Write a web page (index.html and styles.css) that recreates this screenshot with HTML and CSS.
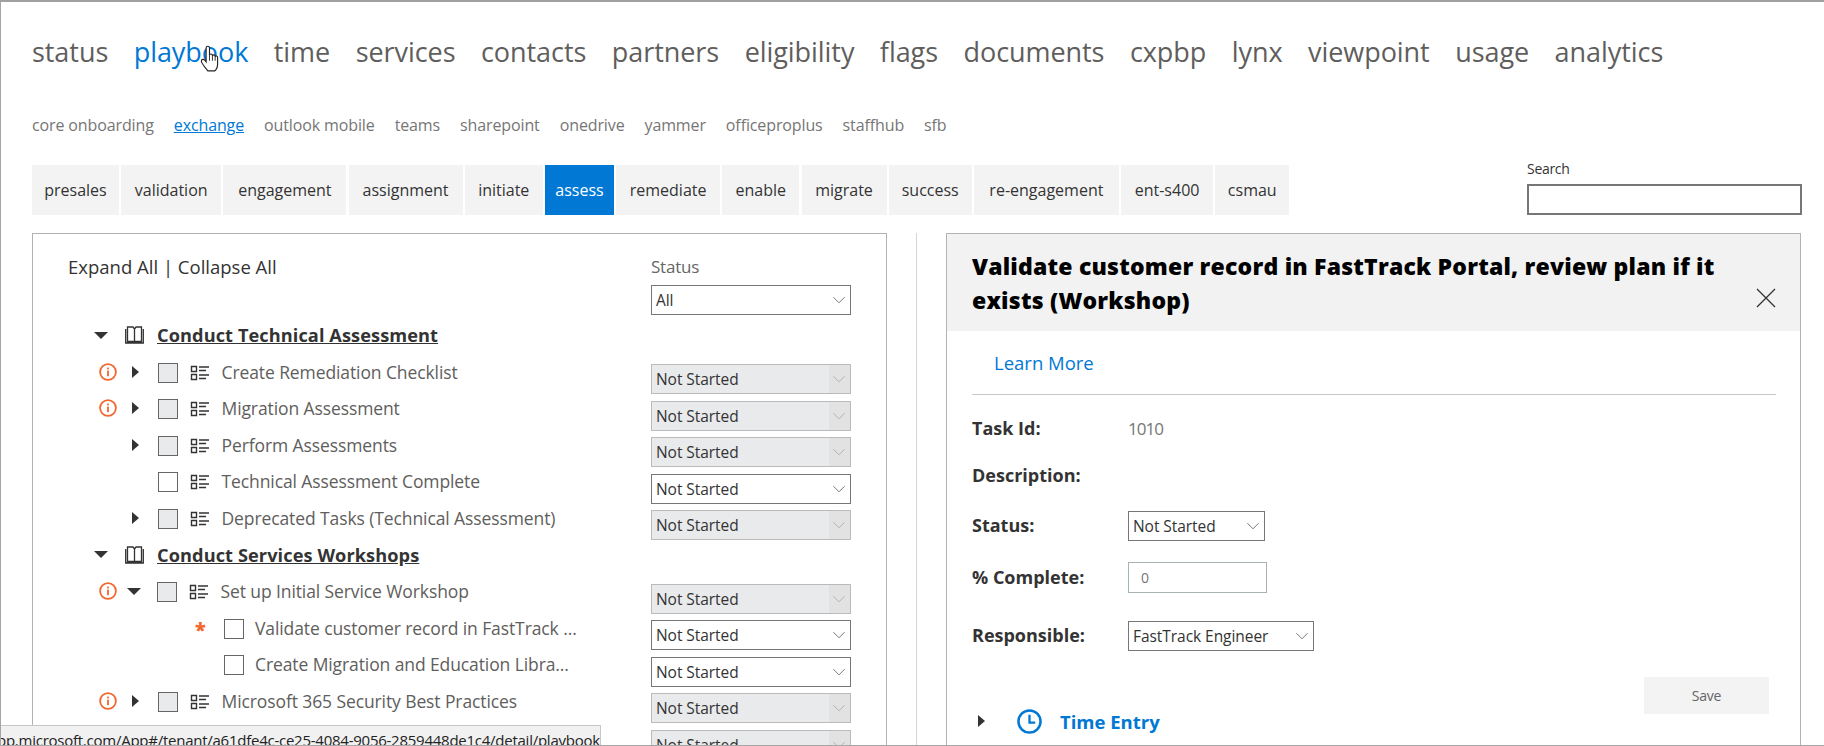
FILE: index.html
```html
<!DOCTYPE html>
<html lang="en">

<head>
    <meta charset="UTF-8">
    <title>Playbook</title>
    <link rel="stylesheet" href="styles.css">
</head>

<body>
    <svg class="icon-defs" width="0" height="0">
        <symbol id="i-info" viewBox="0 0 18 18">
            <circle cx="9" cy="9" r="7.9" fill="none" stroke="#f2672f" stroke-width="1.8" />
            <rect x="8.1" y="7.6" width="1.8" height="5.6" fill="#f2672f" />
            <rect x="8.1" y="4.6" width="1.8" height="1.8" fill="#f2672f" />
        </symbol>
        <symbol id="i-list" viewBox="0 0 20 16">
            <path d="M1.5 1.5h5v5h-5zM1.5 9.5h5v5h-5z" fill="none" stroke="#333" stroke-width="1.4" />
            <path d="M9 2h10M9 5.5h7M9 10h10M9 13.5h7" fill="none" stroke="#333" stroke-width="1.4" />
        </symbol>
        <symbol id="i-book" viewBox="0 0 19 18">
            <path d="M.7 3v14h17.6V3M2.5 1H8l1.500 2v12.500H2.500zM16.500 1H11L9.500 3v12.500h7z" fill="none" stroke="#333" stroke-width="1.3" />
        </symbol>
        <symbol id="i-chev" viewBox="0 0 16 10">
            <path d="M1 1.5l7 7 7-7" fill="none" stroke="currentColor" stroke-width="1" />
        </symbol>
    </svg>

    <div class="page">
        <nav class="main-nav">
            <a>status</a>
            <a class="active">playbook</a>
            <a>time</a>
            <a>services</a>
            <a>contacts</a>
            <a>partners</a>
            <a>eligibility</a>
            <a>flags</a>
            <a>documents</a>
            <a>cxpbp</a>
            <a>lynx</a>
            <a>viewpoint</a>
            <a>usage</a>
            <a>analytics</a>
        </nav>

        <nav class="sub-nav">
            <a>core onboarding</a>
            <a class="active">exchange</a>
            <a>outlook mobile</a>
            <a>teams</a>
            <a>sharepoint</a>
            <a>onedrive</a>
            <a>yammer</a>
            <a>officeproplus</a>
            <a>staffhub</a>
            <a>sfb</a>
        </nav>

        <div class="tab-row">
            <div class="tabs">
                <a class="w87">presales</a>
                <a class="w100">validation</a>
                <a class="w123">engagement</a>
                <a class="w114">assignment</a>
                <a class="w78">initiate</a>
                <a class="w69 active">assess</a>
                <a class="w104">remediate</a>
                <a class="w77">enable</a>
                <a class="w85">migrate</a>
                <a class="w83">success</a>
                <a class="w145">re-engagement</a>
                <a class="w92">ent-s400</a>
                <a class="w74">csmau</a>
            </div>
            <div class="search">
                <label for="search">Search</label>
                <input type="text" id="search">
            </div>
        </div>

        <div class="content">
            <section class="tree-panel">
                <div class="tree-top">
                    <div class="expand">Expand All | Collapse All</div>
                    <div class="status-filter">
                        <div class="status-label">Status</div>
                        <div class="dd dd-filter">All<svg class="chev"><use href="#i-chev" /></svg></div>
                    </div>
                </div>

                <div class="row group">
                    <div class="tree-cell">
                        <span class="tri-down"></span>
                        <svg class="book"><use href="#i-book" /></svg>
                        <span class="group-name">Conduct Technical Assessment</span>
                    </div>
                </div>

                <div class="row">
                    <div class="tree-cell">
                        <svg class="info"><use href="#i-info" /></svg>
                        <span class="tri-right"></span>
                        <span class="check off"></span>
                        <svg class="list"><use href="#i-list" /></svg>
                        <span class="name">Create Remediation Checklist</span>
                    </div>
                    <div class="dd off">Not Started<span class="dd-btn"><svg class="chev"><use href="#i-chev" /></svg></span></div>
                </div>
                <div class="row">
                    <div class="tree-cell">
                        <svg class="info"><use href="#i-info" /></svg>
                        <span class="tri-right"></span>
                        <span class="check off"></span>
                        <svg class="list"><use href="#i-list" /></svg>
                        <span class="name">Migration Assessment</span>
                    </div>
                    <div class="dd off">Not Started<span class="dd-btn"><svg class="chev"><use href="#i-chev" /></svg></span></div>
                </div>
                <div class="row">
                    <div class="tree-cell">
                        <span class="info-gap"></span>
                        <span class="tri-right"></span>
                        <span class="check off"></span>
                        <svg class="list"><use href="#i-list" /></svg>
                        <span class="name">Perform Assessments</span>
                    </div>
                    <div class="dd off">Not Started<span class="dd-btn"><svg class="chev"><use href="#i-chev" /></svg></span></div>
                </div>
                <div class="row">
                    <div class="tree-cell">
                        <span class="info-gap"></span>
                        <span class="tri-gap"></span>
                        <span class="check"></span>
                        <svg class="list"><use href="#i-list" /></svg>
                        <span class="name">Technical Assessment Complete</span>
                    </div>
                    <div class="dd">Not Started<svg class="chev"><use href="#i-chev" /></svg></div>
                </div>
                <div class="row">
                    <div class="tree-cell">
                        <span class="info-gap"></span>
                        <span class="tri-right"></span>
                        <span class="check off"></span>
                        <svg class="list"><use href="#i-list" /></svg>
                        <span class="name">Deprecated Tasks (Technical Assessment)</span>
                    </div>
                    <div class="dd off">Not Started<span class="dd-btn"><svg class="chev"><use href="#i-chev" /></svg></span></div>
                </div>

                <div class="row group">
                    <div class="tree-cell">
                        <span class="tri-down"></span>
                        <svg class="book"><use href="#i-book" /></svg>
                        <span class="group-name">Conduct Services Workshops</span>
                    </div>
                </div>

                <div class="row">
                    <div class="tree-cell">
                        <svg class="info"><use href="#i-info" /></svg>
                        <span class="tri-down small"></span>
                        <span class="check off"></span>
                        <svg class="list"><use href="#i-list" /></svg>
                        <span class="name">Set up Initial Service Workshop</span>
                    </div>
                    <div class="dd off">Not Started<span class="dd-btn"><svg class="chev"><use href="#i-chev" /></svg></span></div>
                </div>
                <div class="row child">
                    <div class="tree-cell">
                        <span class="star">*</span>
                        <span class="check"></span>
                        <span class="name">Validate customer record in FastTrack ...</span>
                    </div>
                    <div class="dd">Not Started<svg class="chev"><use href="#i-chev" /></svg></div>
                </div>
                <div class="row child">
                    <div class="tree-cell">
                        <span class="star"></span>
                        <span class="check"></span>
                        <span class="name">Create Migration and Education Libra...</span>
                    </div>
                    <div class="dd">Not Started<svg class="chev"><use href="#i-chev" /></svg></div>
                </div>
                <div class="row">
                    <div class="tree-cell">
                        <svg class="info"><use href="#i-info" /></svg>
                        <span class="tri-right"></span>
                        <span class="check off"></span>
                        <svg class="list"><use href="#i-list" /></svg>
                        <span class="name">Microsoft 365 Security Best Practices</span>
                    </div>
                    <div class="dd off">Not Started<span class="dd-btn"><svg class="chev"><use href="#i-chev" /></svg></span></div>
                </div>
                <div class="row">
                    <div class="tree-cell"></div>
                    <div class="dd off">Not Started<span class="dd-btn"><svg class="chev"><use href="#i-chev" /></svg></span></div>
                </div>
            </section>

            <div class="divider"></div>

            <section class="detail-panel">
                <header class="detail-head">
                    <h2>Validate customer record in FastTrack Portal, review plan if it exists (Workshop)</h2>
                    <svg class="close" viewBox="0 0 20 20"><path d="M1 1l18 18M19 1L1 19" fill="none" stroke="#333" stroke-width="1.3" /></svg>
                </header>
                <div class="detail-body">
                    <a class="learn">Learn More</a>
                    <hr>
                    <div class="field f-task"><b>Task Id:</b><span class="val">1010</span></div>
                    <div class="field f-desc"><b>Description:</b></div>
                    <div class="field f-status"><b>Status:</b>
                        <div class="dd dd-status">Not Started<svg class="chev"><use href="#i-chev" /></svg></div>
                    </div>
                    <div class="field f-pct"><b>% Complete:</b>
                        <div class="num">0</div>
                    </div>
                    <div class="field f-resp"><b>Responsible:</b>
                        <div class="dd dd-resp">FastTrack Engineer<svg class="chev"><use href="#i-chev" /></svg></div>
                    </div>
                    <div class="save-row"><button class="save">Save</button></div>
                    <div class="time-entry">
                        <span class="tri-right"></span>
                        <svg class="clock" viewBox="0 0 24 24">
                            <circle cx="12" cy="12" r="10.6" fill="none" stroke="#0078d4" stroke-width="2.4" />
                            <path d="M12 5.5V13h5.5" fill="none" stroke="#0078d4" stroke-width="2.2" />
                        </svg>
                        <a>Time Entry</a>
                    </div>
                </div>
            </section>
        </div>

        <!-- browser status bubble and the mouse pointer sit on top of the page -->
        <div class="status-bubble"><span>pp.microsoft.com/App#/tenant/a61dfe4c-ce25-4084-9056-2859448de1c4/detail/playbook</span></div>
        <svg class="cursor" viewBox="0 0 16 24">
            <path d="M5 11V2.6c0-2 3-2 3 0V9c0-1.4 2.6-1.400 2.6 0v.8c0-1.300 2.400-1.300 2.400 0v.8c0-1.200 2.200-1.200 2.200.2V17c0 3-1.400 5.600-2.600 6H6.500C5 21 1 16.800.8 14.500c-.2-2 2-2.200 3-1L5 15z" fill="#fff" stroke="#222" stroke-width="1" />
            <path d="M8 9v5M10.600 9.800V14M13 10.600V14" stroke="#222" stroke-width=".8" fill="none" />
        </svg>
    </div>
</body>

</html>
```

FILE: styles.css
```css
* {
    box-sizing: border-box;
}

body {
    margin: 0;
    background: #fff;
    font-family: "Open Sans", "Noto Sans", sans-serif;
    color: #333;
}

.icon-defs {
    position: absolute;
}

.page {
    position: relative;
    height: 746px;
    overflow: hidden;
    padding: 0 22px 0 31px;
    border: 1px solid #a6a6a6;
    border-top: 2px solid #a0a0a0;
    border-right: 0;
}

/* top nav */
.main-nav {
    display: flex;
    gap: 25.5px;
    padding-top: 32px;
    height: 102px;
    font-size: 27px;
    line-height: 36px;
    letter-spacing: -0.06px;
    color: #605e5c;
}

.main-nav .active {
    color: #0078d4;
}

.sub-nav {
    display: flex;
    gap: 20px;
    height: 61px;
    padding-top: 9px;
    font-size: 16px;
    line-height: 24px;
    letter-spacing: -0.12px;
    color: #767676;
}

.sub-nav .active {
    color: #0078d4;
    text-decoration: underline;
}

/* tabs */
.tab-row {
    display: flex;
    justify-content: space-between;
    height: 50px;
}

.tabs {
    display: flex;
    gap: 2.2px;
}

.tabs a {
    display: flex;
    align-items: center;
    justify-content: center;
    background: #f3f3f3;
    font-size: 16px;
    color: #333;
}

.tabs .active {
    background: #0078d4;
    color: #fff;
}

.w87 { width: 87px; }
.w100 { width: 100px; }
.w123 { width: 123px; }
.w114 { width: 114px; }
.w78 { width: 78px; }
.w69 { width: 69px; }
.w104 { width: 104px; }
.w77 { width: 77px; }
.w85 { width: 85px; }
.w83 { width: 83px; }
.w145 { width: 145px; }
.w92 { width: 92px; }
.w74 { width: 74px; }

.search {
    width: 275px;
    margin-top: -7px;
}

.search label {
    display: block;
    height: 26px;
    font-size: 14px;
    line-height: 22px;
    letter-spacing: -0.3px;
}

.search input {
    display: block;
    width: 100%;
    height: 31px;
    border: 2px solid #767676;
    background: #fff;
}

/* panels */
.content {
    display: flex;
    align-items: stretch;
    height: 600px;
    margin-top: 18px;
}

.tree-panel {
    width: 855px;
    border: 1px solid #b3b3b3;
    border-bottom: 0;
    padding-left: 35px;
    padding-right: 35px;
}

.divider {
    width: 1px;
    margin: 0 29px;
    background: #d6d6d6;
}

.detail-panel {
    width: 855px;
    border: 1px solid #b3b3b3;
    border-bottom: 0;
}

.tree-top {
    display: flex;
    justify-content: space-between;
    height: 87px;
    padding-top: 20px;
}

.expand {
    font-size: 18.5px;
    line-height: 26px;
}

.status-filter {
    width: 200px;
}

.status-label {
    height: 31px;
    font-size: 17px;
    line-height: 26px;
    letter-spacing: -0.2px;
    color: #666;
}

.row {
    display: flex;
    justify-content: space-between;
    height: 36.6px;
}

.tree-cell {
    display: flex;
    align-items: center;
    height: 30px;
    margin-top: -1px;
    font-size: 17.5px;
}

.group .tree-cell {
    padding-left: 26px;
    font-size: 18.2px;
}

.group-name {
    margin-left: 1px;
    font-weight: 700;
    letter-spacing: 0.08px;
    text-decoration: underline;
    color: #333;
}

.name {
    letter-spacing: -0.1px;
    color: #605e5c;
    white-space: nowrap;
}

.info {
    width: 18px;
    height: 18px;
    margin: 0 14.5px 0 31px;
    flex: none;
}

.info-gap {
    width: 63.5px;
    flex: none;
}

.tri-right {
    width: 0;
    height: 0;
    margin-right: 19.5px;
    flex: none;
    border-left: 7px solid #333;
    border-top: 6px solid transparent;
    border-bottom: 6px solid transparent;
}

.tri-gap {
    width: 26.5px;
    flex: none;
}

.tri-down {
    width: 0;
    height: 0;
    margin-right: 17px;
    flex: none;
    border-top: 7px solid #333;
    border-left: 7.5px solid transparent;
    border-right: 7.5px solid transparent;
}

.tri-down.small {
    margin-left: -5px;
    margin-right: 16.5px;
}

.book {
    width: 19px;
    height: 18px;
    margin-right: 12px;
    flex: none;
}

.check {
    width: 20px;
    height: 20px;
    margin-right: 12px;
    margin-top: 2px;
    flex: none;
    border: 1px solid #666;
    background: #fff;
}

.check.off {
    background: #e9eaec;
}

.list {
    width: 20px;
    height: 16px;
    margin-top: 2px;
    margin-right: 11.5px;
    flex: none;
}

.child .tree-cell {
    padding-left: 127px;
}

.child .check {
    margin-right: 11px;
}

.star {
    width: 29px;
    flex: none;
    padding-top: 5px;
    font-size: 20px;
    line-height: 20px;
    font-weight: 800;
    color: #f2672f;
}

/* dropdowns */
.dd {
    position: relative;
    width: 200px;
    height: 30px;
    flex: none;
    padding-left: 4px;
    border: 1px solid #767676;
    background: #fff;
    font-size: 15.5px;
    line-height: 28px;
    letter-spacing: -0.05px;
    color: #333;
}

.row .dd {
    margin-top: 6.5px;
}

.dd.off {
    border-color: #bbb;
    background: #e9eaec;
}

.dd-btn {
    position: absolute;
    top: 0;
    right: 0;
    bottom: 0;
    width: 21px;
    background: #e2e2e2;
}

.chev {
    position: absolute;
    top: 10px;
    right: 4px;
    width: 14px;
    height: 8px;
    color: #555;
}

.dd.off .chev {
    color: #a6a6a6;
}

/* detail */
.detail-head {
    display: flex;
    justify-content: space-between;
    align-items: flex-end;
    height: 97px;
    padding: 0 24px 23px 25px;
    background: #f2f2f2;
}

.detail-head h2 {
    width: 760px;
    margin: 0 0 -9px;
    font-size: 23px;
    line-height: 33.5px;
    font-weight: 800;
    letter-spacing: 0.2px;
    color: #000;
}

.close {
    width: 20px;
    height: 20px;
    flex: none;
}

.detail-body {
    padding: 0 24px 0 25px;
}

.learn {
    display: block;
    height: 63px;
    padding: 19px 0 0 22px;
    font-size: 18.5px;
    line-height: 26px;
    color: #0078d4;
}

.detail-body hr {
    height: 1px;
    margin: 0;
    border: 0;
    background: #c8c8c8;
}

.field {
    display: flex;
    align-items: center;
    font-size: 18px;
}

.field b {
    width: 156px;
    flex: none;
    margin-top: -2px;
    color: #333;
}

.val {
    margin-top: -2px;
    font-size: 17px;
    letter-spacing: -1px;
    color: #767676;
}

.f-task {
    height: 26px;
    margin-top: 21px;
}

.f-desc {
    height: 26px;
    margin-top: 21px;
}

.f-status {
    height: 30px;
    margin-top: 22px;
}

.f-pct {
    height: 31px;
    margin-top: 21px;
}

.f-resp {
    height: 30px;
    margin-top: 28px;
}

.dd-status {
    width: 137px;
}

.dd-resp {
    width: 186px;
}

.num {
    width: 139px;
    height: 31px;
    padding-left: 12px;
    border: 1px solid #a6b3b3;
    font-size: 14px;
    line-height: 29px;
    color: #767676;
}

.save-row {
    display: flex;
    justify-content: flex-end;
    padding-right: 7px;
    height: 0;
}

.save {
    width: 125px;
    height: 37px;
    margin-top: 26px;
    border: 0;
    background: #f3f3f3;
    font-family: inherit;
    font-size: 14px;
    letter-spacing: -0.2px;
    color: #666;
}

.time-entry {
    display: flex;
    align-items: center;
    height: 26px;
    margin-top: 57px;
    padding-left: 6px;
}

.time-entry .tri-right {
    margin-right: 32px;
}

.clock {
    width: 25px;
    height: 25px;
    margin-right: 18px;
}

.time-entry a {
    font-size: 18.5px;
    font-weight: 700;
    color: #0078d4;
}

/* overlays */
.status-bubble {
    position: absolute;
    left: 0;
    bottom: 0;
    width: 600px;
    height: 20px;
    overflow: hidden;
    border: 1px solid #c8c8c8;
    border-width: 1px 1px 0 0;
    background: #f1f1f1;
    font-size: 15px;
    line-height: 29px;
    letter-spacing: -0.25px;
    white-space: nowrap;
    color: #222;
}

.status-bubble span {
    margin-left: -4px;
}

.cursor {
    position: absolute;
    left: 199px;
    top: 43px;
    width: 19px;
    height: 27px;
}
```
